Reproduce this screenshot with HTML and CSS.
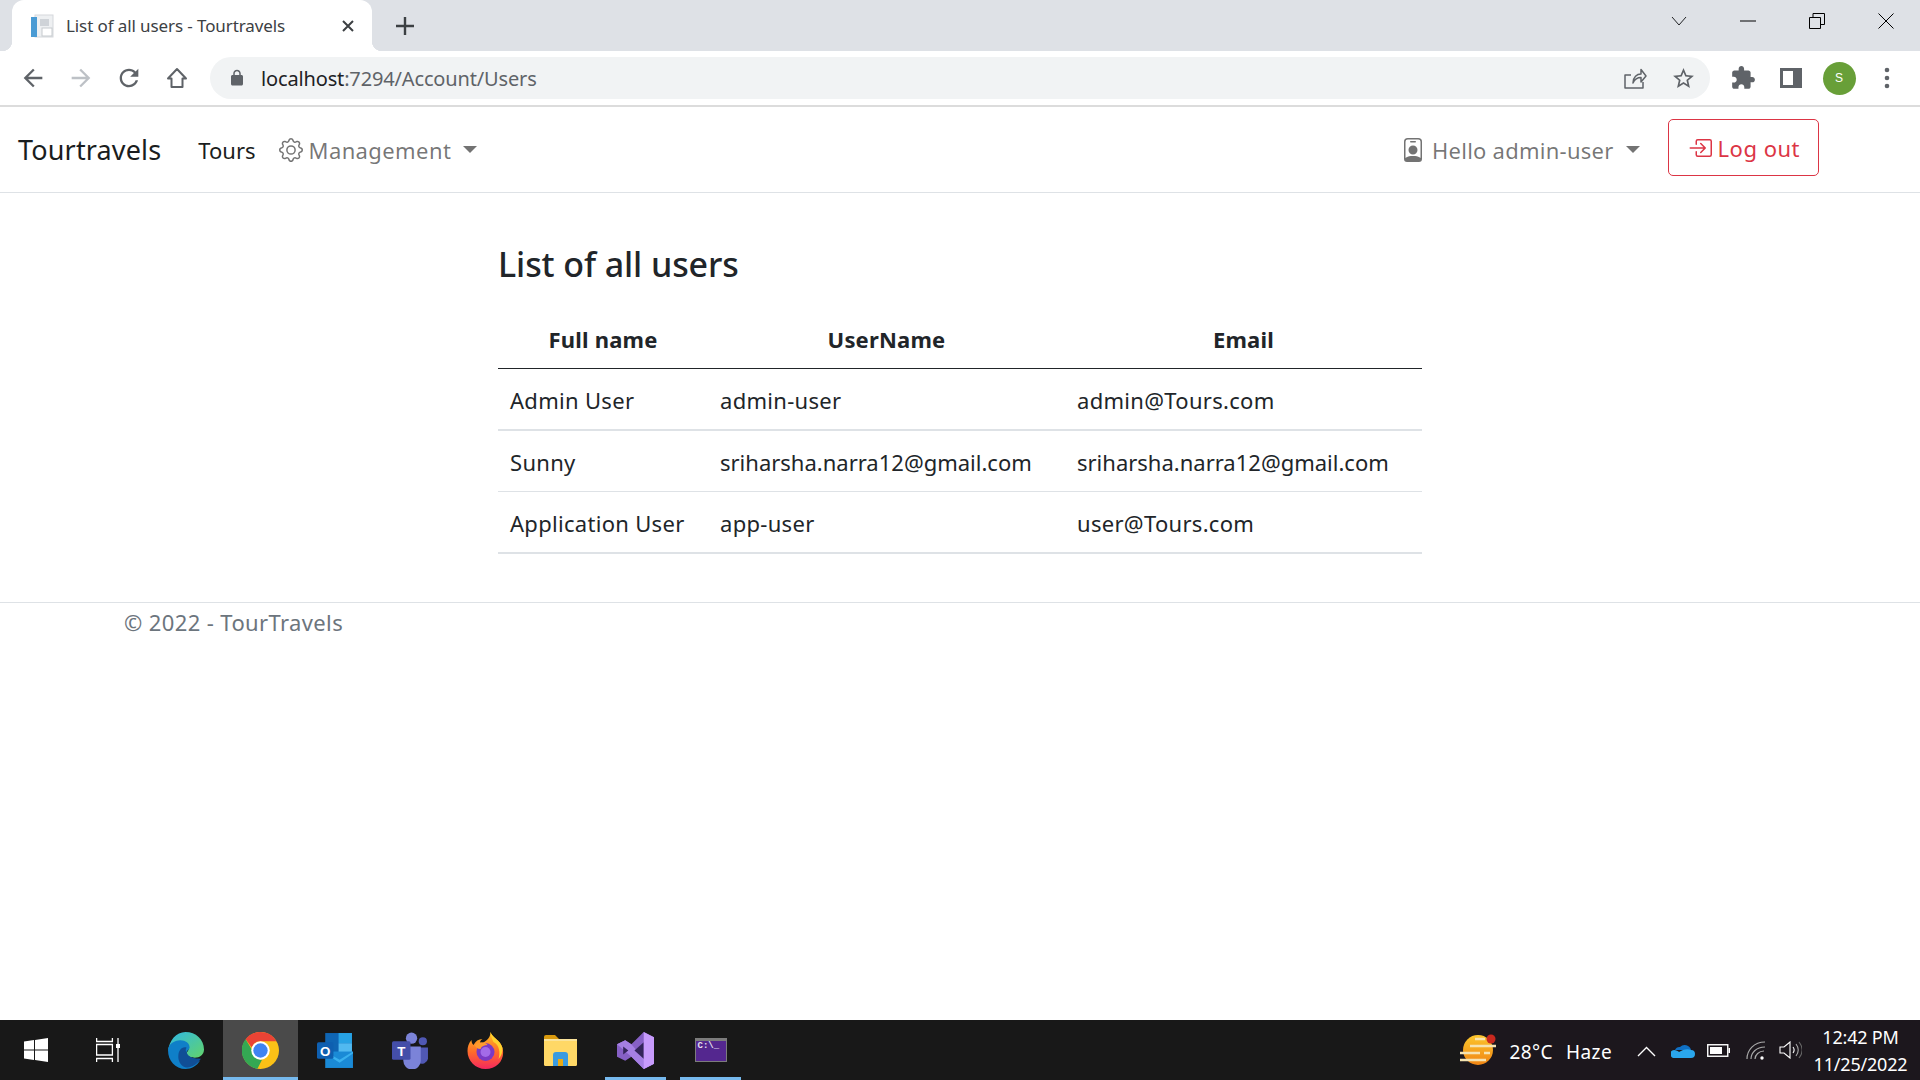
FILE: index.html
```html
<!DOCTYPE html>
<html lang="en">
<head>
  <meta charset="UTF-8">
  <meta name="viewport" content="width=device-width, initial-scale=1.0">
  <title>List of all users - Tourtravels</title>
  <link rel="stylesheet" href="styles.css">
</head>
<body>
  <div class="tabstrip">
    <div class="tab">
      <svg class="favicon" width="24" height="24" viewBox="0 0 24 24">
        <rect x="5" y="1" width="18" height="22" fill="#eef0f2" stroke="#d5d8dc"/>
        <rect x="1" y="3" width="6" height="20" fill="#4a9bd4"/>
        <rect x="10" y="5" width="9" height="7" fill="#cfd3d8"/>
        <rect x="12" y="14" width="10" height="8" fill="#fff" stroke="#c6cace"/>
      </svg>
      <span class="tab-title">List of all users - Tourtravels</span>
      <svg class="tab-close" width="14" height="14" viewBox="0 0 14 14"><path d="M2 2l10 10M12 2L2 12" stroke="#3c4043" stroke-width="2"/></svg>
    </div>
    <svg class="new-tab" width="20" height="20" viewBox="0 0 20 20"><path d="M10 1v18M1 10h18" stroke="#3c4043" stroke-width="2.4"/></svg>
    <div class="win-controls">
      <div class="win-btn"><svg width="16" height="10" viewBox="0 0 16 10"><path d="M1 1l7 8 7-8" fill="none" stroke="#202124"/></svg></div>
      <div class="win-btn"><svg width="16" height="2" viewBox="0 0 16 2"><path d="M0 1h16" stroke="#000" stroke-width="1"/></svg></div>
      <div class="win-btn"><svg width="16" height="16" viewBox="0 0 16 16"><path d="M.5 4.5h11v11H.5zM4 4V.5h11.500v11H12" fill="none" stroke="#000"/></svg></div>
      <div class="win-btn"><svg width="16" height="16" viewBox="0 0 16 16"><path d="M.5.5l15 15M15.500.5l-15 15" stroke="#000"/></svg></div>
    </div>
  </div>

  <div class="toolbar">
    <div class="tool-btn"><svg width="28" height="28" viewBox="0 0 24 24"><path class="ic" d="M20 11H7.830l5.590-5.590L12 4l-8 8 8 8 1.410-1.410L7.830 13H20v-2z"/></svg></div>
    <div class="tool-btn"><svg width="28" height="28" viewBox="0 0 24 24"><path class="ic-off" d="M4 11h12.170l-5.590-5.590L12 4l8 8-8 8-1.410-1.410L16.170 13H4v-2z"/></svg></div>
    <div class="tool-btn"><svg width="28" height="28" viewBox="0 0 24 24"><path class="ic" d="M17.650 6.350C16.200 4.900 14.210 4 12 4c-4.420 0-7.990 3.580-7.990 8s3.570 8 7.990 8c3.730 0 6.840-2.550 7.730-6h-2.080c-.82 2.330-3.040 4-5.650 4-3.310 0-6-2.690-6-6s2.690-6 6-6c1.660 0 3.140.69 4.220 1.780L13 11h7V4l-2.350 2.350z"/></svg></div>
    <div class="tool-btn"><svg width="24" height="24" viewBox="0 0 24 24"><path d="M3 12.500L12 3l9 9.500h-3.500V21h-11v-8.500z" fill="none" stroke="#5f6368" stroke-width="2" stroke-linejoin="round"/></svg></div>
    <div class="omnibox">
      <svg class="lock" width="18" height="18" viewBox="0 0 24 24"><path class="ic" d="M18 8h-1V6c0-2.760-2.240-5-5-5S7 3.240 7 6v2H6c-1.100 0-2 .9-2 2v10c0 1.100.9 2 2 2h12c1.100 0 2-.9 2-2V10c0-1.100-.9-2-2-2zM9 6c0-1.660 1.340-3 3-3s3 1.340 3 3v2H9V6z"/></svg>
      <span class="url"><span class="url-host">localhost</span>:7294/Account/Users</span>
      <div class="tool-btn"><svg width="24" height="24" viewBox="0 0 24 24"><path d="M9 22H2V9h6M2 22h18v-6M10 17c0-6 4-9 8-9V3.500l5 6.500-5 6v-4.500c-3 0-6 1-8 5.500z" fill="none" stroke="#5f6368" stroke-width="1.500" stroke-linejoin="round"/></svg></div>
      <div class="tool-btn"><svg width="25" height="25" viewBox="0 0 24 24"><path class="ic" d="M22 9.240l-7.190-.62L12 2 9.190 8.630 2 9.240l5.460 4.730L5.820 21 12 17.270 18.180 21l-1.630-7.030L22 9.240zM12 15.400l-3.760 2.270 1-4.280-3.320-2.880 4.380-.38L12 6.100l1.710 4.040 4.380.38-3.320 2.880 1 4.280L12 15.400z"/></svg></div>
    </div>
    <div class="tool-btn first-ext"><svg width="26" height="26" viewBox="0 0 24 24"><path class="ic" d="M20.500 11H19V7c0-1.100-.9-2-2-2h-4V3.500C13 2.120 11.880 1 10.500 1S8 2.120 8 3.500V5H4c-1.100 0-1.990.9-1.990 2v3.800H3.500c1.490 0 2.700 1.210 2.700 2.700s-1.210 2.700-2.700 2.700H2V20c0 1.100.9 2 2 2h3.800v-1.500c0-1.490 1.210-2.700 2.700-2.700 1.490 0 2.700 1.210 2.700 2.700V22H17c1.100 0 2-.9 2-2v-4h1.500c1.380 0 2.500-1.120 2.500-2.500S21.880 11 20.500 11z"/></svg></div>
    <div class="tool-btn"><svg width="22" height="20" viewBox="0 0 22 20"><path class="ic" fill-rule="evenodd" d="M0 0h22v20H0zM3 3v14h10V3z"/></svg></div>
    <div class="tool-btn"><span class="avatar">S</span></div>
    <div class="tool-btn"><svg width="6" height="22" viewBox="0 0 6 22"><circle class="ic" cx="3" cy="3" r="2.300"/><circle class="ic" cx="3" cy="11" r="2.300"/><circle class="ic" cx="3" cy="19" r="2.300"/></svg></div>
  </div>

  <nav class="navbar">
    <a class="brand">Tourtravels</a>
    <a class="nav-link nav-dark">Tours</a>
    <a class="nav-link">
      <svg width="24" height="24" viewBox="0 0 16 16" fill="currentColor"><path d="M8 4.754a3.246 3.246 0 1 0 0 6.492 3.246 3.246 0 0 0 0-6.492zM5.754 8a2.246 2.246 0 1 1 4.492 0 2.246 2.246 0 0 1-4.492 0z"/><path d="M9.796 1.343c-.527-1.790-3.065-1.790-3.592 0l-.094.319a.873.873 0 0 1-1.255.520l-.292-.160c-1.640-.892-3.433.902-2.540 2.541l.159.292a.873.873 0 0 1-.520 1.255l-.319.094c-1.790.527-1.790 3.065 0 3.592l.319.094a.873.873 0 0 1 .520 1.255l-.160.292c-.892 1.640.901 3.434 2.541 2.540l.292-.159a.873.873 0 0 1 1.255.520l.094.319c.527 1.790 3.065 1.790 3.592 0l.094-.319a.873.873 0 0 1 1.255-.520l.292.160c1.640.893 3.434-.902 2.540-2.541l-.159-.292a.873.873 0 0 1 .520-1.255l.319-.094c1.790-.527 1.790-3.065 0-3.592l-.319-.094a.873.873 0 0 1-.520-1.255l.160-.292c.893-1.640-.902-3.433-2.541-2.540l-.292.159a.873.873 0 0 1-1.255-.520l-.094-.319zm-2.633.283c.246-.835 1.428-.835 1.674 0l.094.319a1.873 1.873 0 0 0 2.693 1.115l.291-.160c.764-.415 1.600.420 1.184 1.185l-.159.292a1.873 1.873 0 0 0 1.116 2.692l.318.094c.835.246.835 1.428 0 1.674l-.319.094a1.873 1.873 0 0 0-1.115 2.693l.160.291c.415.764-.420 1.600-1.185 1.184l-.291-.159a1.873 1.873 0 0 0-2.693 1.116l-.094.318c-.246.835-1.428.835-1.674 0l-.094-.319a1.873 1.873 0 0 0-2.692-1.115l-.292.160c-.764.415-1.600-.420-1.184-1.185l.159-.291A1.873 1.873 0 0 0 1.945 8.930l-.319-.094c-.835-.246-.835-1.428 0-1.674l.319-.094A1.873 1.873 0 0 0 3.060 4.377l-.160-.292c-.415-.764.420-1.600 1.185-1.184l.292.159a1.873 1.873 0 0 0 2.692-1.115l.094-.319z"/></svg>
      Management<span class="caret"></span>
    </a>
    <div class="nav-right">
      <a class="nav-link nav-user">
        <svg width="24" height="24" viewBox="0 0 16 16" fill="currentColor"><path d="M6.500 2a.5.5 0 0 0 0 1h3a.5.5 0 0 0 0-1h-3zM11 8a3 3 0 1 1-6 0 3 3 0 0 1 6 0z"/><path d="M4.500 0A2.500 2.500 0 0 0 2 2.500V14a2 2 0 0 0 2 2h8a2 2 0 0 0 2-2V2.500A2.500 2.500 0 0 0 11.500 0h-7zM3 2.500A1.500 1.500 0 0 1 4.500 1h7A1.500 1.500 0 0 1 13 2.500v10.795a4.200 4.200 0 0 0-.776-.492C11.392 12.387 10.063 12 8 12s-3.392.387-4.224.803a4.200 4.200 0 0 0-.776.492V2.500z"/></svg>
        Hello admin-user<span class="caret"></span>
      </a>
      <a class="btn-logout">
        <svg width="24" height="24" viewBox="0 0 16 16" fill="currentColor"><path fill-rule="evenodd" d="M6 3.500a.5.5 0 0 1 .5-.5h8a.5.5 0 0 1 .5.5v9a.5.5 0 0 1-.5.5h-8a.5.5 0 0 1-.5-.5v-2a.5.5 0 0 0-1 0v2A1.500 1.500 0 0 0 6.500 14h8a1.500 1.500 0 0 0 1.500-1.500v-9A1.500 1.500 0 0 0 14.500 2h-8A1.500 1.500 0 0 0 5 3.500v2a.5.5 0 0 0 1 0v-2z"/><path fill-rule="evenodd" d="M11.854 8.354a.5.5 0 0 0 0-.708l-3-3a.5.5 0 1 0-.708.708L10.293 7.500H1.500a.5.5 0 0 0 0 1h8.793l-2.147 2.146a.5.5 0 0 0 .708.708l3-3z"/></svg>
        Log out
      </a>
    </div>
  </nav>

  <main class="content">
    <h1 class="page-title">List of all users</h1>
    <table class="users-table">
      <colgroup><col class="col-name"><col class="col-user"><col class="col-email"></colgroup>
      <thead>
        <tr><th>Full name</th><th>UserName</th><th>Email</th></tr>
      </thead>
      <tbody>
        <tr><td>Admin User</td><td>admin-user</td><td>admin@Tours.com</td></tr>
        <tr class="row-short"><td>Sunny</td><td class="cell-long">sriharsha.narra12@gmail.com</td><td class="cell-long">sriharsha.narra12@gmail.com</td></tr>
        <tr><td>Application User</td><td>app-user</td><td>user@Tours.com</td></tr>
      </tbody>
    </table>
  </main>

  <footer class="footer">© 2022 - TourTravels</footer>

  <div class="taskbar">
    <div class="tb-slot tb-sys"><svg width="24" height="24" viewBox="0 0 24 24" fill="#fff"><path d="M0 3.500l10-1.400v9.400H0zM11 2l13-2v11.500H11zM0 12.500h10v9.400L0 20.500zM11 12.500h13V24l-13-2z"/></svg></div>
    <div class="tb-slot tb-sys tb-gap"><svg width="24" height="24" viewBox="0 0 24 24" fill="none" stroke="#fff" stroke-width="1.300"><path d="M.6 0v3.500h15.800V0M.6 6.500h15.800v10.500H.6zM.6 24v-3.500h15.800V24M22 0v6M22 10v14"/><rect x="20" y="6" width="4" height="4" fill="#fff" stroke="none"/></svg></div>
    <div class="tb-slot">
      <svg width="37" height="37" viewBox="0 0 36 36"><defs><linearGradient id="edgeA" x1="0" y1="0" x2="1" y2="1"><stop offset="0" stop-color="#2fb8e6"/><stop offset="1" stop-color="#62d36a"/></linearGradient></defs><path d="M18 0c10 0 18 7 18 17 0 5-4 8-9 8-4 0-7-1-8-4 0-2 2-2 2-5 0-4-4-6-8-6-6 0-11 4-12 9C2 8 9 0 18 0z" fill="url(#edgeA)"/><path d="M1 18c0-6 6-10 12-10 5 0 9 3 9 7 0 2-3 3-3 5-3 8 5 12 13 8-3 5-8 8-14 8C8 36 1 28 1 18z" fill="#0f7fc8"/><path d="M11 24c0-6 3-10 8-9-1 2-1 3 0 5 2 5 8 6 14 6-4 6-11 10-16 8-4-2-6-6-6-10z" fill="#104e96"/></svg>
    </div>
    <div class="tb-slot tb-active">
      <svg width="37" height="37" viewBox="0 0 36 36"><circle cx="18" cy="18" r="18" fill="#fbc117"/><path d="M18 0a18 18 0 0 1 15.600 9H18a9 9 0 0 0-8.500 6L3.500 7A18 18 0 0 1 18 0z" fill="#ea4335"/><path d="M3.500 7L11 19.500a9 9 0 0 0 8.500 7.400L15 35.800A18 18 0 0 1 3.500 7z" fill="#34a853"/><circle cx="18" cy="18" r="9" fill="#fff"/><circle cx="18" cy="18" r="7" fill="#3f83f1"/></svg>
    </div>
    <div class="tb-slot">
      <svg width="37" height="37" viewBox="0 0 36 36"><rect x="8" y="1" width="26" height="20" fill="#0f65b3"/><rect x="21" y="1" width="13" height="10" fill="#27a2e4"/><rect x="21" y="11" width="13" height="10" fill="#51b9f0"/><path d="M8 19h27v16H8z" fill="#1a8ad6"/><path d="M8 19l14 8 13-8v2L22 30 8 21z" fill="#39b0ee"/><rect x="0" y="10" width="16" height="16" rx="1.500" fill="#0e5fb0"/><text class="icon-letter" x="8" y="23">O</text></svg>
    </div>
    <div class="tb-slot">
      <svg width="37" height="37" viewBox="0 0 36 36"><circle cx="19" cy="6" r="5.500" fill="#7b83d8"/><circle cx="30" cy="9" r="4" fill="#5058b4"/><path d="M26 15h9v11a6 6 0 0 1-9 4z" fill="#5058b4"/><path d="M11 14h17v14a8.500 8.500 0 0 1-17 0z" fill="#7b83d8"/><rect x="0" y="9" width="18" height="18" rx="1.500" fill="#444ea8"/><text class="icon-letter" x="9" y="23">T</text></svg>
    </div>
    <div class="tb-slot">
      <svg width="37" height="38" viewBox="0 0 36 38"><defs><linearGradient id="fxA" x1="0" y1="0" x2="0" y2="1"><stop offset="0" stop-color="#ffc21f"/><stop offset=".55" stop-color="#ff6a2b"/><stop offset="1" stop-color="#f4275f"/></linearGradient></defs><path d="M23 1c1 5 10 8 12 16 3 11-5 21-17 21C8 38 0 30 0 20c0-4 1-8 4-11 0 3 1 4 2 5 2-4 5-6 9-6-2 1-3 3-2 5 3-2 10-4 10-12z" fill="url(#fxA)"/><circle cx="18" cy="21" r="9" fill="#7a3ac4"/><circle cx="18" cy="21" r="5" fill="#a36be8"/><path d="M7 14c5-4 11-3 13 0-3 0-6 1-7 4-3 0-5-2-6-4z" fill="#ff9b2e"/><path d="M23 1c1 5 10 8 12 16 0 4-1 8-4 11 2-6 1-14-5-17-1-2-3-6-3-10z" fill="#ffd22e"/></svg>
    </div>
    <div class="tb-slot">
      <svg width="33" height="32" viewBox="0 0 33 32"><path d="M0 3a2 2 0 0 1 2-2h9l4 4v5H0z" fill="#d99a0e"/><rect x="0" y="5" width="33" height="27" rx="1.500" fill="#ffd866"/><rect x="0" y="5" width="33" height="2" fill="#fbe49b"/><path d="M9 32V21a3 3 0 0 1 3-3h9a3 3 0 0 1 3 3v11h-5V25h-5v7z" fill="#3a9be0"/><rect x="14" y="25" width="5" height="7" fill="#e9a913"/></svg>
    </div>
    <div class="tb-slot tb-active-line">
      <svg width="37" height="37" viewBox="0 0 36 36"><path d="M26 0l10 5v26l-10 5-12-12-6 4-8-4V12l8-4 6 4z" fill="#8660c5"/><path d="M8 8L0 12l14 12 12 12 10-5-10-5-12-14z" fill="#a57fe3"/><path d="M6 14v8l5-4z" fill="#33245a"/><path d="M26 10v16l-9-8z" fill="#33245a"/><path d="M26 0l10 5v26l-10 5v-10V10z" fill="#c79bfb"/></svg>
    </div>
    <div class="tb-slot tb-active-line">
      <div class="term-icon"><span class="term-prompt">C:\_</span></div>
    </div>

    <div class="tray">
      <svg class="weather" width="37" height="32" viewBox="0 0 37 32"><defs><linearGradient id="sun" x1="0" y1="0" x2="0" y2="1"><stop offset="0" stop-color="#fcc62d"/><stop offset="1" stop-color="#f08414"/></linearGradient></defs><circle cx="18" cy="16" r="15" fill="url(#sun)"/><path d="M15 5h10M10 12h26M0 19h20M24 19h6M0 26h26" stroke="#f6e3b2" stroke-width="2.400"/><circle cx="31" cy="5" r="4.500" fill="#c8281e"/></svg>
      <span class="temp">28°C</span>
      <span class="haze">Haze</span>
      <svg class="tray-chevron" width="19" height="11" viewBox="0 0 19 11"><path d="M1 10l8.500-8.500L18 10" fill="none" stroke="#fff" stroke-width="1.400"/></svg>
      <svg class="tray-ico" width="24" height="16" viewBox="0 0 24 16"><path d="M4 8a5 5 0 0 1 5-3 6.500 6.500 0 0 1 11 3z" fill="#0f70c4"/><path d="M4 16a4 4 0 0 1-1-8c2 0 4 1 5 2l4-2c3-1 6-1 8 0a4 4 0 0 1 0 8z" fill="#2aa6ec"/></svg>
      <svg class="tray-ico tray-battery" width="23" height="13" viewBox="0 0 23 13"><rect x=".75" y=".75" width="20" height="11.500" fill="none" stroke="#fff" stroke-width="1.400"/><rect x="3" y="3" width="12" height="7" fill="#fff"/><rect x="21.500" y="4" width="1.500" height="5" fill="#fff"/></svg>
      <svg class="tray-ico tray-wifi" width="20" height="19" viewBox="0 0 20 19" fill="none" stroke="#aaa" stroke-width="1.200"><path d="M1 18C1 9 8 1 19 1M5 18c0-6 5-12 14-12M9 18c0-4 4-8 9-8"/><circle cx="16" cy="17" r="1.700" fill="#fff" stroke="none"/></svg>
      <svg class="tray-ico tray-vol" width="23" height="18" viewBox="0 0 23 18" fill="none" stroke="#fff" stroke-width="1.100"><path d="M1 6h4l6-5v16l-6-5H1z"/><path d="M14 6c1.500 2 1.500 4 0 6"/><path d="M17 3c3 4 3 8 0 12" stroke="#aaa"/><path d="M20 1c4 5 4 11 0 16" stroke="#666"/></svg>
      <div class="clock"><span>12:42 PM</span><span>11/25/2022</span></div>
      <div class="show-desktop"></div>
    </div>
  </div>
</body>
</html>
```

FILE: styles.css
```css
* {
  box-sizing: border-box;
}
body {
  margin: 0;
  height: 1080px;
  overflow: hidden;
  display: flex;
  flex-direction: column;
  background-color: #fff;
  color: #212529;
  font-family: "Noto Sans", "Open Sans", sans-serif;
  font-size: 22px;
}
svg {
  display: block;
  flex-shrink: 0;
}
.ic {
  fill: #5f6368;
}
.ic-off {
  fill: #bdc1c6;
}

/* browser chrome */
.tabstrip {
  display: flex;
  align-items: center;
  height: 51px;
  background-color: #dee1e6;
}
.tab {
  position: relative;
  display: flex;
  align-items: center;
  width: 360px;
  height: 51px;
  margin-left: 12px;
  padding: 0 17px 0 18px;
  background-color: #fff;
  border-radius: 12px 12px 0 0;
}
.tab::before,
.tab::after {
  content: "";
  position: absolute;
  bottom: 0;
  width: 10px;
  height: 10px;
}
.tab::before {
  left: -10px;
  background: radial-gradient(circle at 0 0, transparent 10px, #fff 10.500px);
}
.tab::after {
  right: -10px;
  background: radial-gradient(circle at 100% 0, transparent 10px, #fff 10.500px);
}
.tab-title {
  flex: 1;
  margin-left: 12px;
  font-size: 17px;
  color: #3c4043;
  letter-spacing: -0.1px;
  white-space: nowrap;
}
.new-tab {
  margin-left: 23px;
}
.win-controls {
  display: flex;
  margin-left: auto;
  align-self: flex-start;
}
.win-btn {
  display: flex;
  align-items: center;
  justify-content: center;
  width: 69px;
  height: 42px;
}
.toolbar {
  display: flex;
  align-items: center;
  height: 56px;
  padding: 0 9px;
  background-color: #fff;
  border-bottom: 2px solid #dcdcdc;
}
.tool-btn {
  display: flex;
  align-items: center;
  justify-content: center;
  width: 48px;
  height: 42px;
  flex-shrink: 0;
}
.omnibox {
  flex: 1;
  display: flex;
  align-items: center;
  height: 42px;
  margin-left: 9px;
  padding: 0 3px 0 18px;
  background-color: #f1f3f4;
  border-radius: 21px;
}
.lock {
  margin-right: 15px;
}
.url {
  flex: 1;
  font-size: 20px;
  color: #5f6368;
  letter-spacing: -0.15px;
}
.url-host {
  color: #202124;
}
.first-ext {
  margin-left: 9px;
}
.avatar {
  display: flex;
  align-items: center;
  justify-content: center;
  width: 33px;
  height: 33px;
  border-radius: 50%;
  background-color: #689f38;
  color: #fff;
  font-family: "Liberation Sans", sans-serif;
  font-size: 12px;
}

/* site navbar */
.navbar {
  display: flex;
  align-items: center;
  height: 86px;
  padding: 0 101px 0 18px;
  border-bottom: 1px solid #dee2e6;
}
.brand {
  margin-right: 37px;
  font-size: 27px;
  letter-spacing: 0.15px;
  color: #1a1d20;
}
.nav-link {
  display: flex;
  align-items: center;
  margin-right: 24px;
  color: rgba(0, 0, 0, 0.55);
  letter-spacing: 0.4px;
}
.nav-link svg {
  margin-right: 6px;
}
.nav-dark {
  margin-right: 23px;
  color: #1a1d20;
  letter-spacing: 0;
}
.nav-user {
  margin-right: 28px;
  letter-spacing: 0.25px;
}
.nav-user svg {
  margin-right: 7px;
}
.caret {
  width: 0;
  height: 0;
  margin-left: 12px;
  border-top: 7px solid currentColor;
  border-left: 7px solid transparent;
  border-right: 7px solid transparent;
}
.nav-right {
  display: flex;
  align-items: center;
  margin-left: auto;
}
.btn-logout {
  display: flex;
  align-items: center;
  height: 57px;
  margin-bottom: 4px;
  padding: 0 18px 0 19px;
  border: 1px solid #dc3545;
  border-radius: 5px;
  color: #dc3545;
  letter-spacing: 0.5px;
}
.btn-logout svg {
  margin-right: 6px;
}

/* page */
.content {
  flex: 1;
  width: 924px;
  margin: 0 auto;
}
.page-title {
  margin: 50px 0 25px;
  font-size: 34px;
  font-weight: 500;
  line-height: 42px;
  letter-spacing: -0.1px;
}
.users-table {
  width: 100%;
  table-layout: fixed;
  border-collapse: separate;
  border-spacing: 0;
}
.col-name {
  width: 210px;
}
.col-email {
  width: 357px;
}
.users-table th {
  height: 59px;
  padding: 0 12px;
  text-align: center;
  font-size: 22px;
  font-weight: 700;
  letter-spacing: 0.2px;
  border-bottom: 1px solid #212529;
}
.users-table td {
  height: 62px;
  padding: 2px 12px 0;
  white-space: nowrap;
  letter-spacing: 0.3px;
  border-bottom: 2px solid #dee2e6;
}
.users-table .row-short td {
  height: 61px;
  border-bottom-width: 1px;
}
.users-table .cell-long {
  letter-spacing: 0;
}
.footer {
  height: 418px;
  padding: 4px 0 0 124px;
  border-top: 1px solid #dee2e6;
  color: #6c757d;
  letter-spacing: 0.38px;
}

/* windows taskbar */
.taskbar {
  display: flex;
  align-items: stretch;
  flex-shrink: 0;
  height: 60px;
  background-color: #181818;
  color: #fff;
}
.tb-slot {
  display: flex;
  align-items: center;
  justify-content: center;
  position: relative;
  width: 75px;
}
.tb-sys {
  width: 72px;
}
.tb-gap {
  margin-right: 4px;
}
.tb-active {
  background-color: #4a4a4a;
}
.tb-active::after,
.tb-active-line::after {
  content: "";
  position: absolute;
  bottom: 0;
  left: 7px;
  right: 7px;
  height: 3px;
  background-color: #76b9ed;
}
.tb-active::after {
  left: 0;
  right: 0;
}
.icon-letter {
  fill: #fff;
  font-family: "Liberation Sans", sans-serif;
  font-size: 13px;
  font-weight: 700;
  text-anchor: middle;
}
.term-icon {
  width: 32px;
  height: 24px;
  background-color: #54278f;
  border: 1px solid #7c7c7c;
  border-top-width: 3px;
}
.term-prompt {
  display: block;
  padding: 1px 0 0 2px;
  font-family: "Liberation Mono", monospace;
  font-size: 9px;
  font-weight: 700;
  line-height: 9px;
  color: #e6e0f0;
}
.tray {
  display: flex;
  align-items: center;
  margin-left: auto;
  background-color: #1c171d;
}
.weather {
  margin-right: 13px;
}
.temp,
.haze {
  margin-top: 4px;
  font-size: 19px;
  letter-spacing: 0.4px;
}
.temp {
  margin-right: 13px;
}
.tray-chevron {
  margin: 2px 0 0 25px;
}
.tray-ico {
  margin-left: 15px;
}
.tray-battery {
  margin-left: 12px;
}
.tray-wifi {
  margin-left: 16px;
}
.tray-vol {
  margin-left: 13px;
}
.clock {
  display: flex;
  flex-direction: column;
  align-items: center;
  gap: 5px;
  width: 95px;
  margin: 1px 0 0 11px;
  font-size: 18px;
  line-height: 22px;
  letter-spacing: -0.2px;
}
.show-desktop {
  width: 2px;
  margin-left: 4px;
  margin-right: 6px;
  background-color: #666;
}
```
